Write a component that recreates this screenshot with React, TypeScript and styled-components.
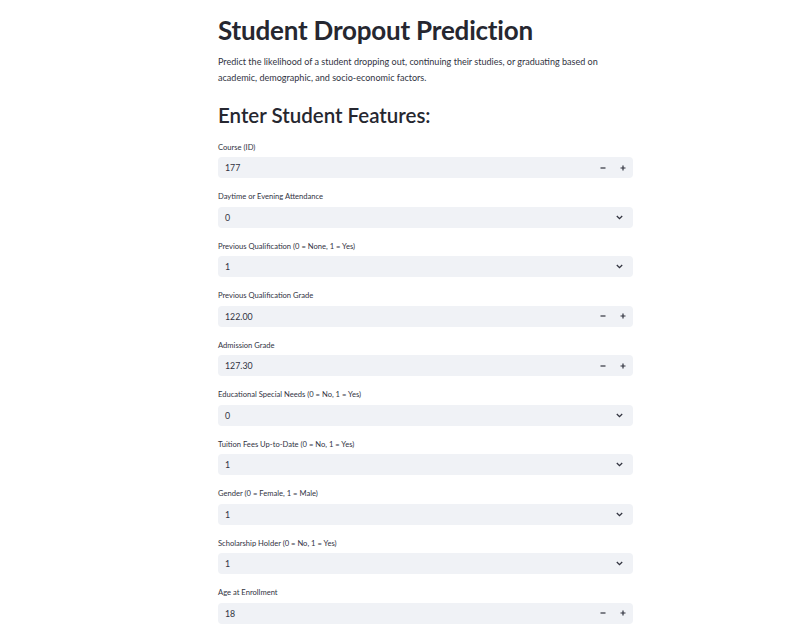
import React from "react";
import styled, { createGlobalStyle } from "styled-components";

const Global = createGlobalStyle`
  html, body { margin: 0; padding: 0; background: #ffffff; }
  body { font-family: Lato, "Noto Sans", sans-serif; color: #31333f; }
`;

const Page = styled.div`
  width: 811px;
  min-height: 636px;
  overflow: hidden;
`;

const Main = styled.main`
  width: 415px;
  margin-left: 218px;
  padding-top: 14px;
  display: flex;
  flex-direction: column;
`;

const Title = styled.h1`
  margin: 0;
  font-family: Lato, "Noto Sans", sans-serif;
  font-weight: 700;
  font-size: 26px;
  line-height: 32px;
  color: #262730;
  letter-spacing: -0.2px;
`;

const Intro = styled.p`
  margin: 8px 0 0 0;
  font-size: 9.05px;
  line-height: 16px;
  color: #31333f;
`;

const SubHeader = styled.h2`
  margin: 16px 0 0 0;
  font-weight: 600;
  font-size: 20.5px;
  line-height: 26px;
  color: #262730;
`;

const Fields = styled.div`
  display: flex;
  flex-direction: column;
  gap: 12.05px;
  margin-top: 12.5px;
`;

const Field = styled.div`
  display: flex;
  flex-direction: column;
`;

const Label = styled.label`
  font-size: 7.6px;
  line-height: 12px;
  height: 12px;
  color: #31333f;
  margin-bottom: 4.5px;
`;

const Box = styled.div`
  height: 21px;
  background: #f0f2f6;
  border-radius: 4px;
  display: flex;
  align-items: center;
`;

const Value = styled.span`
  flex: 1;
  padding-left: 7px;
  font-size: 8.8px;
  color: #31333f;
`;

const StepButton = styled.button`
  width: 20px;
  height: 21px;
  border: none;
  background: transparent;
  padding: 0;
  display: flex;
  align-items: center;
  justify-content: center;
  color: #31333f;
`;

const ChevronWrap = styled.span`
  width: 24px;
  display: flex;
  align-items: center;
  justify-content: center;
  padding-right: 2px;
`;

type FieldDef = { label: string; value: string; kind: "number" | "select" };

const fields: FieldDef[] = [
  { label: "Course (ID)", value: "177", kind: "number" },
  { label: "Daytime or Evening Attendance", value: "0", kind: "select" },
  { label: "Previous Qualification (0 = None, 1 = Yes)", value: "1", kind: "select" },
  { label: "Previous Qualification Grade", value: "122.00", kind: "number" },
  { label: "Admission Grade", value: "127.30", kind: "number" },
  { label: "Educational Special Needs (0 = No, 1 = Yes)", value: "0", kind: "select" },
  { label: "Tuition Fees Up-to-Date (0 = No, 1 = Yes)", value: "1", kind: "select" },
  { label: "Gender (0 = Female, 1 = Male)", value: "1", kind: "select" },
  { label: "Scholarship Holder (0 = No, 1 = Yes)", value: "1", kind: "select" },
  { label: "Age at Enrollment", value: "18", kind: "number" },
];

const Minus = () => (
  <svg width="6" height="6" viewBox="0 0 6 6">
    <path d="M0.5 3h5" stroke="#31333f" strokeWidth="1.2" />
  </svg>
);

const Plus = () => (
  <svg width="6" height="6" viewBox="0 0 6 6">
    <path d="M0.5 3h5M3 0.5v5" stroke="#31333f" strokeWidth="1.2" />
  </svg>
);

const Chevron = () => (
  <svg width="7" height="5" viewBox="0 0 7 5">
    <path d="M0.8 1l2.7 2.7L6.2 1" stroke="#31333f" strokeWidth="1.3" fill="none" />
  </svg>
);

export default function App() {
  return (
    <Page>
      <Global />
      <Main>
        <Title>Student Dropout Prediction</Title>
        <Intro>
          Predict the likelihood of a student dropping out, continuing their studies, or graduating based on
          academic, demographic, and socio-economic factors.
        </Intro>
        <SubHeader>Enter Student Features:</SubHeader>
        <Fields>
          {fields.map((f) => (
            <Field key={f.label}>
              <Label>{f.label}</Label>
              <Box>
                <Value>{f.value}</Value>
                {f.kind === "number" ? (
                  <>
                    <StepButton aria-label="decrement"><Minus /></StepButton>
                    <StepButton aria-label="increment"><Plus /></StepButton>
                  </>
                ) : (
                  <ChevronWrap><Chevron /></ChevronWrap>
                )}
              </Box>
            </Field>
          ))}
        </Fields>
      </Main>
    </Page>
  );
}
